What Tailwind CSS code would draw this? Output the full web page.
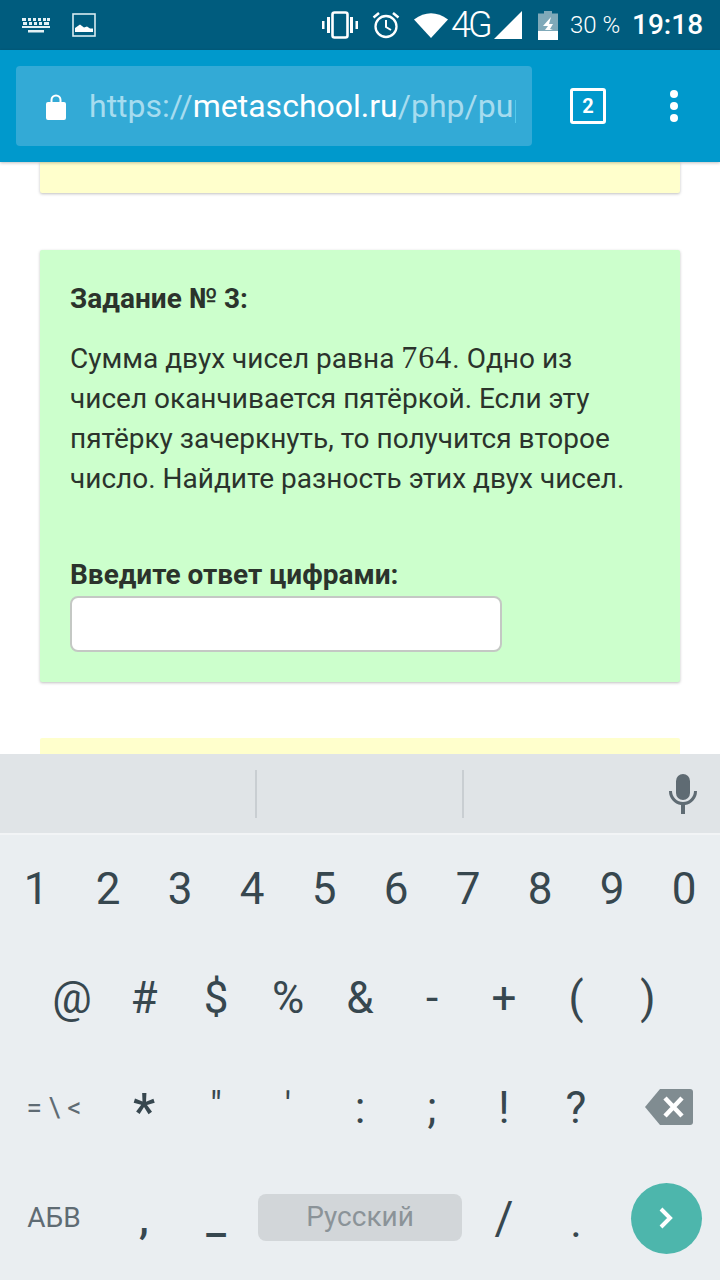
<!DOCTYPE html>
<html lang="ru">
  <head>
    <meta charset="UTF-8" />
    <meta name="viewport" content="width=device-width, initial-scale=1.0" />
    <title>Задание № 3</title>
    <script src="https://cdn.jsdelivr.net/npm/@tailwindcss/browser@4"></script>
  </head>
  <body class="bg-white font-['Roboto',sans-serif]">
    <div class="w-[720px] h-[1280px] overflow-hidden flex flex-col">
      <!-- Status bar -->
      <div class="h-[50px] shrink-0 bg-[#005c7e] text-white flex items-center pl-[22px]">
        <svg class="w-[28px] h-[16px] mr-[22px]" viewBox="0 0 28 16" fill="#e4f1f5">
          <path d="M0 1h4v3H0zM6 1h3v3H6zM11 1h3v3h-3zM16 1h3v3h-3zM21 1h3v3h-3zM25 1h3v3h-3zM1 5h4v3H1zM7 5h3v3H7zM12 5h3v3h-3zM17 5h3v3h-3zM22 5h5v3h-5zM0 9h28v2H0zM6 13h16v2.500H6z" />
        </svg>
        <svg class="w-[24px] h-[24px]" viewBox="0 0 24 24">
          <rect x="1" y="1" width="22" height="22" fill="none" stroke="#d8ebf1" stroke-width="1.600" />
          <path d="M3 19v-4l5-3.500 4 3 3-1 3 2 3 0v3.500z" fill="#fff" />
        </svg>
        <svg class="w-[36px] h-[28px] ml-[226px]" viewBox="0 0 36 28" fill="#fff">
          <path d="M0 10h2.500v8H0zM5 6h3v16H5zM28 6h3v16h-3zM33.500 10H36v8h-2.500z" />
          <rect x="10.500" y="1.500" width="15" height="25" rx="2" fill="none" stroke="#fff" stroke-width="2.600" />
        </svg>
        <svg class="w-[28px] h-[28px] ml-[14px]" viewBox="0 0 28 28" fill="none" stroke="#fff">
          <circle cx="14" cy="15.500" r="10.500" stroke-width="2.300" />
          <path d="M14 9v7l5 3" stroke-width="2" />
          <path d="M1.500 6.500L7 2M26.500 6.500L21 2" stroke-width="2.500" />
        </svg>
        <svg class="w-[34px] h-[26px] ml-[14px]" viewBox="0 0 34 26" fill="#fff">
          <path d="M0 7.500Q17-5 34 7.500L17 26z" />
        </svg>
        <span class="text-[36px] leading-none tracking-[-3px] w-[42px] ml-[3px] font-light">4G</span>
        <svg class="w-[28px] h-[28px] ml-[1px]" viewBox="0 0 28 28" fill="#fff">
          <path d="M0 28L28 0v28z" />
        </svg>
        <svg class="w-[20px] h-[29px] ml-[16px]" viewBox="0 0 20 29">
          <path d="M6 0h8v2.500h6V29H0V2.500h6z" fill="#7fa9b9" />
          <path d="M0 20h20v9H0z" fill="#fff" />
          <path d="M13 6L5 15h5l-3 4h8l-3-1 3-5h-4z" fill="#fff" />
        </svg>
        <span class="text-[24px] leading-none ml-[12px] font-light w-[50px] whitespace-nowrap">30 %</span>
        <span class="text-[28px] leading-none ml-[12px] font-medium">19:18</span>
      </div>

      <!-- Browser toolbar -->
      <div class="relative z-10 h-[112px] shrink-0 bg-[#0099cc] flex items-center pl-[16px] shadow-[0_1px_3px_rgba(0,0,0,0.25)]">
        <div class="w-[516px] h-[80px] rounded-[4px] bg-[#33aad6] flex items-center pl-[30px] overflow-hidden">
          <svg class="w-[20px] h-[27px] shrink-0" viewBox="0 0 20 27" fill="#fff">
            <path d="M2 9h2.500V7a5.500 5.500 0 0 1 11 0v2H18a2 2 0 0 1 2 2v14a2 2 0 0 1-2 2H2a2 2 0 0 1-2-2V11a2 2 0 0 1 2-2zm4.500 0h7V7a3.500 3.500 0 0 0-7 0z" />
          </svg>
          <div class="w-[427px] ml-[23px] overflow-hidden whitespace-nowrap text-[32px] leading-[40px] text-[#a6dcef]">https://<span class="text-white">metaschool.ru</span>/php/pupil/</div>
        </div>
        <div class="w-[36px] h-[36px] ml-[38px] rounded-[3px] border-[3px] border-white flex items-center justify-center text-white text-[20px] font-bold leading-none">2</div>
        <div class="ml-[64px] flex flex-col gap-[4px]">
          <div class="w-[8px] h-[8px] rounded-full bg-white"></div>
          <div class="w-[8px] h-[8px] rounded-full bg-white"></div>
          <div class="w-[8px] h-[8px] rounded-full bg-white"></div>
        </div>
      </div>

      <!-- Page content -->
      <div class="h-[592px] shrink-0 overflow-hidden bg-white px-[40px]">
        <div class="h-[31px] bg-[#ffffcc] rounded-b-[2px] shadow-[0_1px_3px_rgba(0,0,0,0.25)]"></div>

        <div class="mt-[57px] h-[432px] bg-[#ccffcc] rounded-[2px] shadow-[0_1px_3px_rgba(0,0,0,0.25)] px-[31px] pt-[33px] text-[#2b332c]">
          <div class="text-[28px] leading-[32px] font-bold -ml-[1px]">Задание № 3:</div>
          <div class="mt-[24px] text-[28px] h-[160px] -ml-[1px]">
            <div class="h-[40px] leading-[40px] whitespace-nowrap">Сумма двух чисел равна <span class="font-['Liberation_Serif',serif] text-[32px] leading-none tracking-[1px]">764</span>. Одно из</div>
            <div class="h-[40px] leading-[40px]">чисел оканчивается пятёркой. Если эту</div>
            <div class="h-[40px] leading-[40px]">пятёрку зачеркнуть, то получится второе</div>
            <div class="h-[40px] leading-[40px]">число. Найдите разность этих двух чисел.</div>
          </div>
          <label for="answer" class="block mt-[60px] -ml-[1px] text-[28px] leading-[32px] font-bold">Введите ответ цифрами:</label>
          <input id="answer" type="text" class="block mt-[5px] -ml-[1px] w-[432px] h-[56px] bg-white rounded-[8px] border-2 border-[#c4c8c4]" />
        </div>

        <div class="mt-[56px] h-[40px] bg-[#ffffcc] rounded-[2px]"></div>
      </div>

      <!-- Keyboard suggestions -->
      <div class="h-[81px] shrink-0 bg-[#e0e4e7] flex items-center border-b-2 border-[#f2f4f6]">
        <div class="w-[257px] h-[48px] border-r-2 border-[#c9ced2]"></div>
        <div class="w-[207px] h-[48px] border-r-2 border-[#c9ced2]"></div>
        <div class="flex-1 flex justify-end pr-[22px]">
          <svg class="w-[30px] h-[40px]" viewBox="0 0 30 40" fill="#5f6b73">
            <rect x="8" y="0" width="14" height="26" rx="7" />
            <path d="M1 17h3a11 11 0 0 0 22 0h3a14 14 0 0 1-12 14v9h-4v-9A14 14 0 0 1 1 17z" />
          </svg>
        </div>
      </div>

      <!-- Keyboard -->
      <div class="flex-1 bg-[#eaeef1] text-[#37474f]">
        <div class="grid grid-cols-10 h-[107px] items-center text-center text-[44px] leading-none">
          <span>1</span><span>2</span><span>3</span><span>4</span><span>5</span><span>6</span><span>7</span><span>8</span><span>9</span><span>0</span>
        </div>
        <div class="grid grid-cols-9 px-[36px] h-[112px] items-center text-center text-[44px] leading-none">
          <span>@</span><span>#</span><span>$</span><span>%</span><span>&amp;</span><span>-</span><span>+</span><span>(</span><span>)</span>
        </div>
        <div class="grid grid-cols-[108px_repeat(7,72px)_108px] h-[108px] items-center text-center text-[44px] leading-none">
          <span class="text-[28px] text-[#5f6b73] whitespace-nowrap">= \ &lt;</span>
          <span class="font-medium text-[50px] pt-[8px]">*</span>
          <span class="text-[36px] pb-[4px]">"</span>
          <span class="text-[36px] pb-[4px]">'</span>
          <span>:</span><span>;</span><span>!</span><span>?</span>
          <span class="flex justify-center pl-[6px] mb-[2px]">
            <svg class="w-[48px] h-[36px]" viewBox="0 0 48 36">
              <path d="M15 0h30a3 3 0 0 1 3 3v30a3 3 0 0 1-3 3H15L0 18z" fill="#808c91" />
              <path d="M20 9l17 18M37 9L20 27" stroke="#fff" stroke-width="4.500" />
            </svg>
          </span>
        </div>
        <div class="grid grid-cols-[108px_repeat(7,72px)_108px] h-[112px] items-center text-center leading-none">
          <span class="text-[28px] text-[#5f6b73]">АБВ</span>
          <span class="text-[44px] font-medium">,</span>
          <span class="text-[44px] font-medium">_</span>
          <div class="col-span-3 flex justify-center mb-[2px]">
            <div class="w-[204px] h-[47px] rounded-[8px] bg-[#d2d6d9] text-[#8b9398] text-[28px] flex items-center justify-center">Русский</div>
          </div>
          <span class="text-[46px]">/</span>
          <span class="text-[44px] pt-[8px]">.</span>
          <div class="flex justify-center">
            <div class="w-[71px] h-[71px] rounded-full bg-[#4db6ac] flex items-center justify-center">
              <svg class="w-[16px] h-[24px]" viewBox="0 0 16 24" fill="none" stroke="#fff" stroke-width="4">
                <path d="M3 3l9 9-9 9" />
              </svg>
            </div>
          </div>
        </div>
      </div>
    </div>
  </body>
</html>
